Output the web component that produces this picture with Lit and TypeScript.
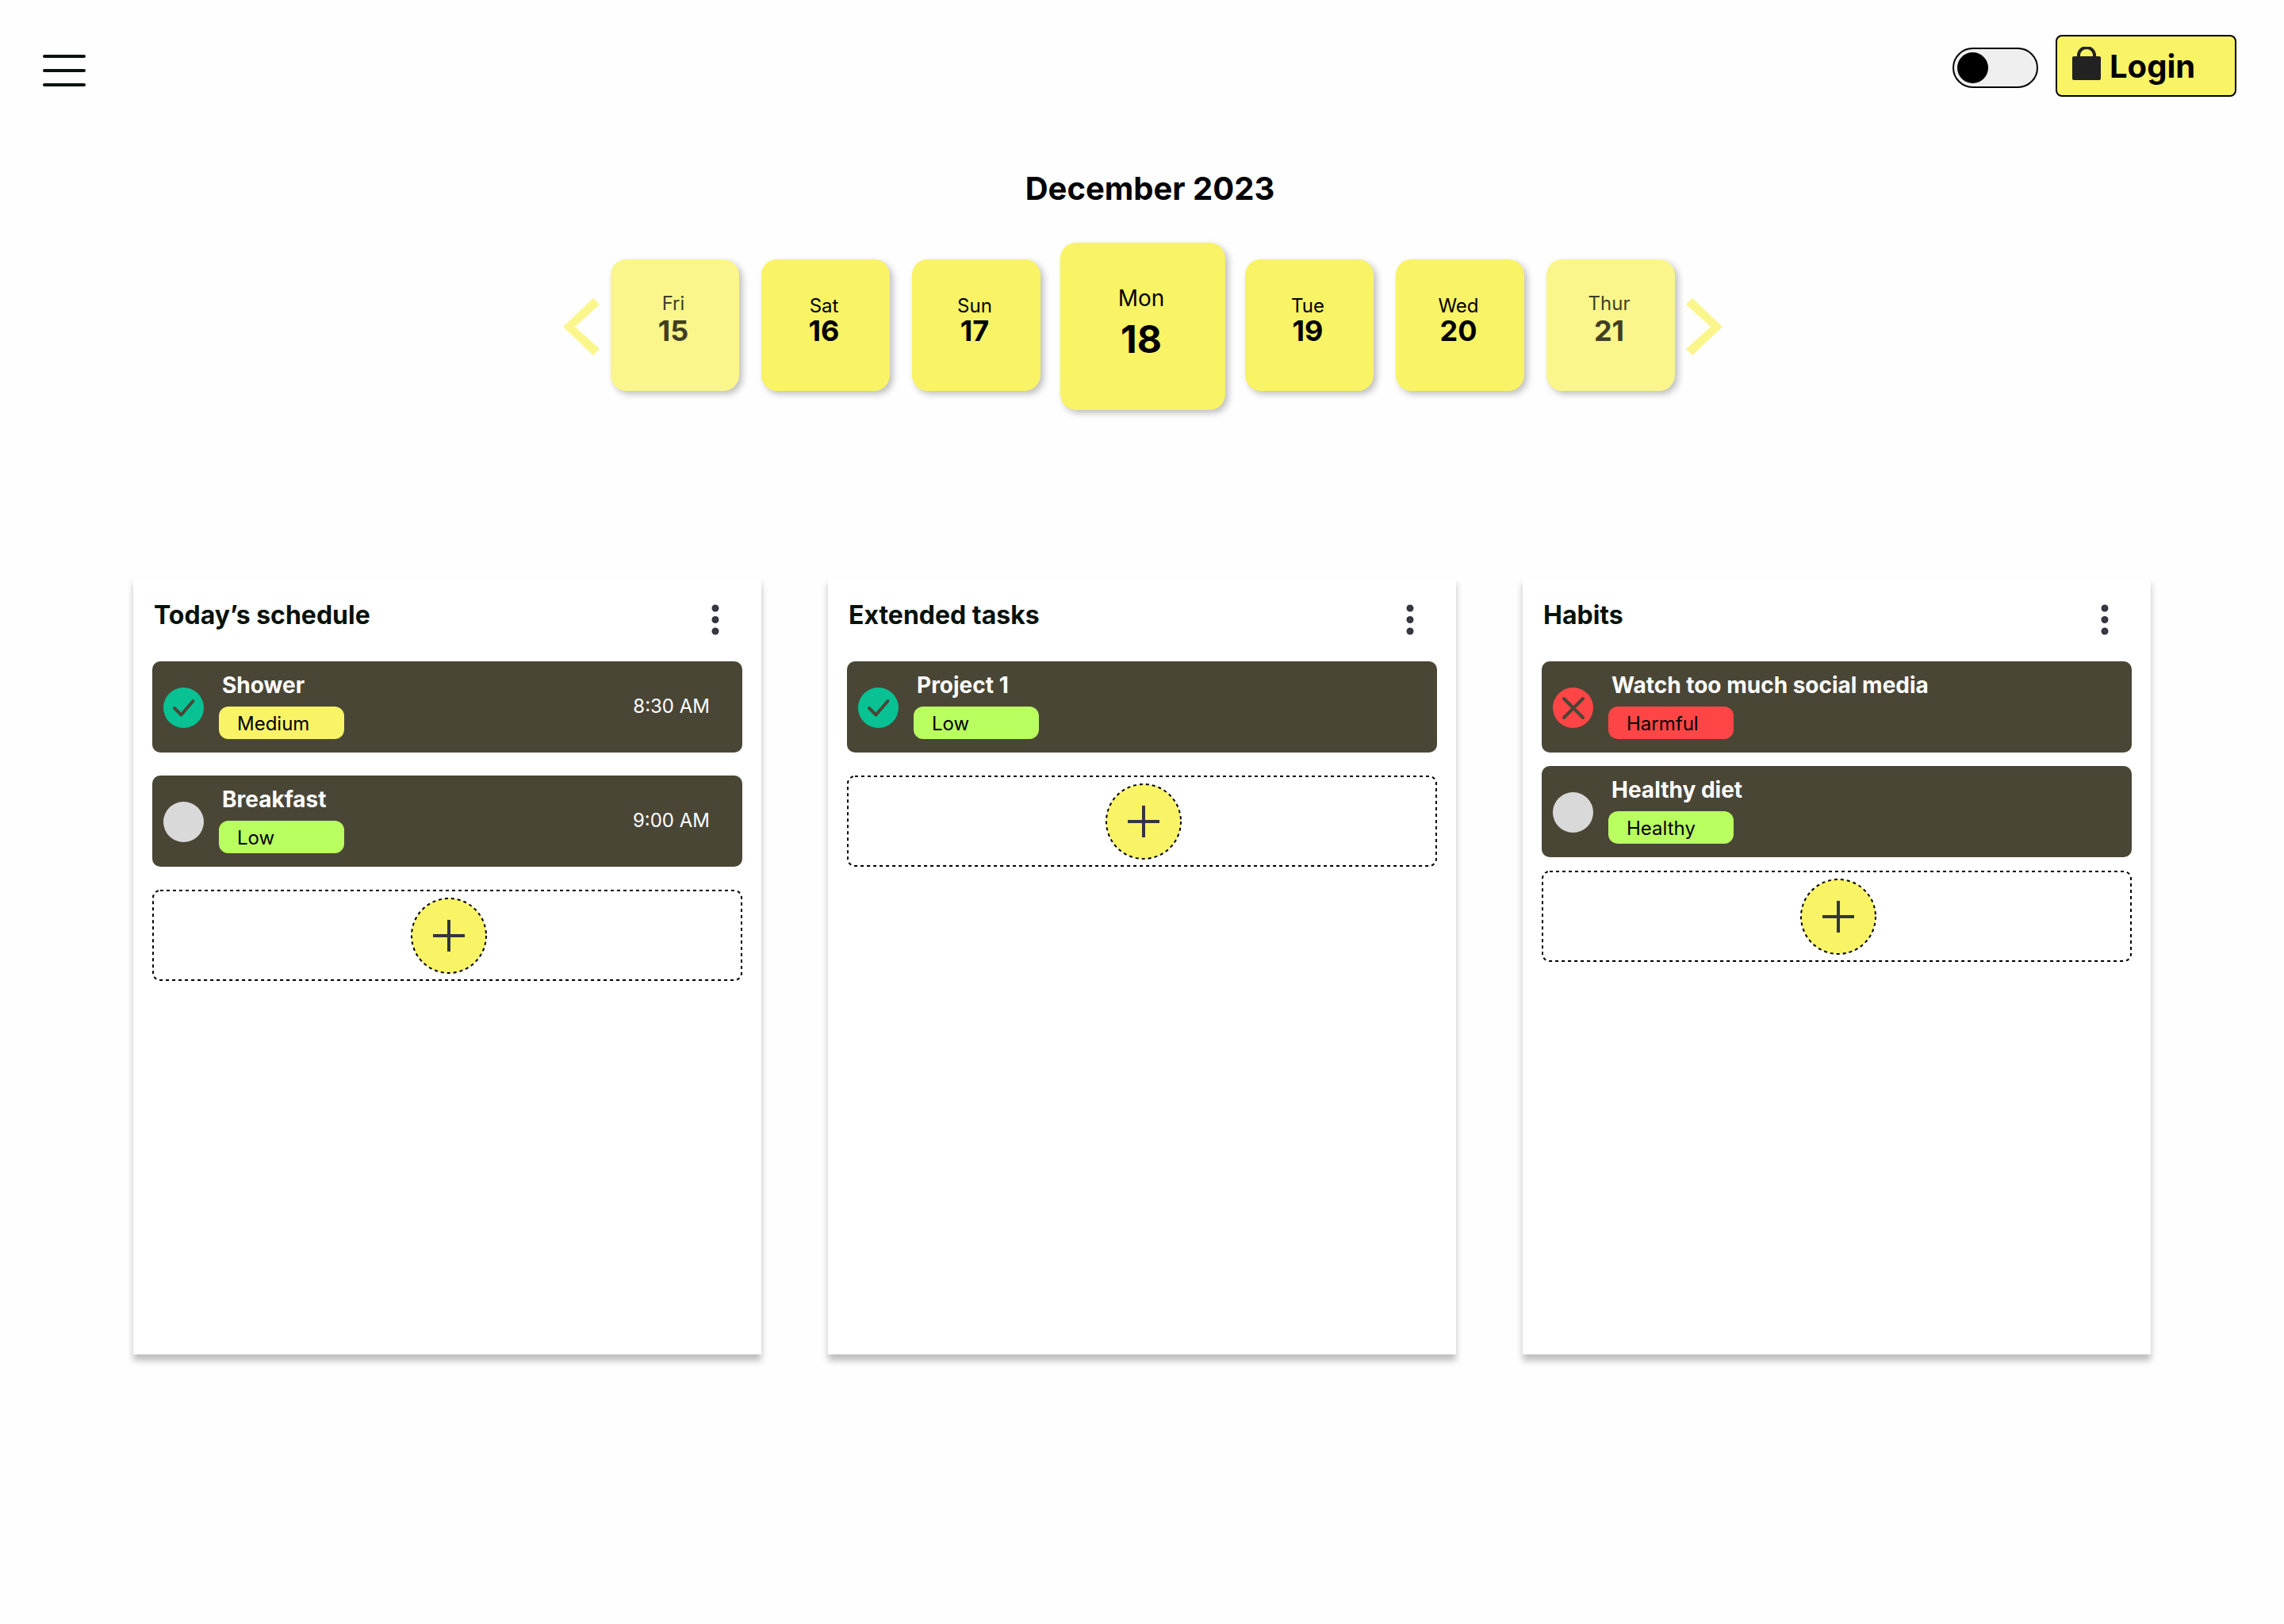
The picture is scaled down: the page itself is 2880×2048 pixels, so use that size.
import { LitElement, html, css, svg, nothing } from "lit";
import { customElement, property, state } from "lit/decorators.js";
import { classMap } from "lit/directives/class-map.js";

type Status = "done" | "failed" | "open";
type Tone = "yellow" | "green" | "red";

interface Task {
  name: string;
  tag: string;
  tone: Tone;
  status: Status;
  time?: string;
}

interface Board {
  title: string;
  compact?: boolean;
  tasks: Task[];
}

interface Day {
  name: string;
  date: number;
  kind?: "muted" | "selected";
}

const DAYS: Day[] = [
  { name: "Fri", date: 15, kind: "muted" },
  { name: "Sat", date: 16 },
  { name: "Sun", date: 17 },
  { name: "Mon", date: 18, kind: "selected" },
  { name: "Tue", date: 19 },
  { name: "Wed", date: 20 },
  { name: "Thur", date: 21, kind: "muted" },
];

const BOARDS: Board[] = [
  {
    title: "Today’s schedule",
    tasks: [
      { name: "Shower", tag: "Medium", tone: "yellow", status: "done", time: "8:30 AM" },
      { name: "Breakfast", tag: "Low", tone: "green", status: "open", time: "9:00 AM" },
    ],
  },
  {
    title: "Extended tasks",
    tasks: [{ name: "Project 1", tag: "Low", tone: "green", status: "done" }],
  },
  {
    title: "Habits",
    compact: true,
    tasks: [
      { name: "Watch too much social media", tag: "Harmful", tone: "red", status: "failed" },
      { name: "Healthy diet", tag: "Healthy", tone: "green", status: "open" },
    ],
  },
];

const reset = css`
  * {
    box-sizing: border-box;
  }
  button {
    margin: 0;
    padding: 0;
    border: 0;
    background: none;
    color: inherit;
    font: inherit;
    cursor: pointer;
  }
  svg {
    display: block;
  }
`;

@customElement("top-bar")
class TopBar extends LitElement {
  static styles = [
    reset,
    css`
      :host {
        display: block;
      }
      .bar {
        display: flex;
        align-items: center;
        gap: 22px;
        padding: 44px 60px 0 54px;
      }
      .menu {
        margin: 12px auto 0 0;
      }
      .switch {
        appearance: none;
        display: flex;
        align-items: center;
        width: 108px;
        height: 51px;
        margin: 5px 0 0;
        padding: 0 4px;
        border: 2px solid #000;
        border-radius: 26px;
        background: #efefef;
        cursor: pointer;
      }
      .switch::before {
        content: "";
        width: 39px;
        height: 39px;
        border-radius: 50%;
        background: #000;
      }
      .switch:checked {
        justify-content: flex-end;
      }
      .login {
        display: flex;
        align-items: center;
        gap: 11px;
        min-width: 228px;
        height: 78px;
        padding: 2px 20px 0 19px;
        border: 2px solid #000;
        border-radius: 8px;
        background: #f9f366;
        color: #000;
        font-size: 40px;
        line-height: 48px;
        font-weight: 700;
      }
    `,
  ];

  render() {
    return html`
      <header class="bar">
        <button class="menu" aria-label="Open menu">
          <svg width="54" height="40" viewBox="0 0 54 40">
            <path d="M2 2H52M2 20H52M2 38H52" stroke="#07120a" stroke-width="4" stroke-linecap="round" />
          </svg>
        </button>
        <input class="switch" type="checkbox" role="switch" aria-label="Dark theme" />
        <button class="login">
          <svg width="36" height="50" viewBox="0 0 36 50" aria-hidden="true">
            <path d="M8 15V11a10 10 0 0 1 20 0V15" fill="none" stroke="#222" stroke-width="4" />
            <rect y="12" width="36" height="30" rx="2" fill="#222" />
          </svg>
          Login
        </button>
      </header>
    `;
  }
}

@customElement("week-strip")
class WeekStrip extends LitElement {
  static styles = [
    reset,
    css`
      :host {
        display: block;
      }
      .month {
        margin: 92px 0 44px;
        padding-left: 20px;
        text-align: center;
        font-size: 40px;
        line-height: 48px;
        font-weight: 700;
      }
      .strip {
        display: flex;
        justify-content: center;
        align-items: center;
        gap: 14px;
        padding-left: 2px;
      }
      .days {
        display: flex;
        align-items: center;
        gap: 28px;
        margin: 0;
        padding: 0;
        list-style: none;
      }
      .day {
        display: flex;
        flex-direction: column;
        align-items: center;
        width: 162px;
        height: 166px;
        margin-bottom: 3px;
        padding: 44px 4px 0 0;
        border-radius: 20px;
        background: #f9f366;
        box-shadow: 4px 4px 8px rgba(0, 0, 0, 0.25);
        color: #000;
      }
      .name {
        font-size: 24px;
        line-height: 29px;
      }
      .date {
        font-size: 36px;
        line-height: 34px;
        font-weight: 700;
      }
      .muted {
        gap: 3px;
        padding-top: 41px;
        background: #faf68c;
        color: #403e24;
      }
      .selected {
        gap: 6px;
        width: 208px;
        height: 211px;
        margin: 0 -3px;
        padding-top: 53px;
      }
      .selected .name {
        font-size: 28px;
        line-height: 34px;
      }
      .selected .date {
        font-size: 48px;
        line-height: 58px;
      }
    `,
  ];

  @state() private days = DAYS;

  private arrow(label: string, points: string) {
    return html`
      <button aria-label=${label}>
        <svg width="46" height="72" viewBox="0 0 46 72">
          <polygon points=${points} fill="#faf68c" />
        </svg>
      </button>
    `;
  }

  render() {
    return html`
      <h1 class="month">December 2023</h1>
      <nav class="strip" aria-label="Week">
        ${this.arrow("Previous days", "38,0 46,8 15,36 46,64 38,72 0,36")}
        <ol class="days">
          ${this.days.map(
            (day) => html`
              <li>
                <button
                  class=${classMap({
                    day: true,
                    muted: day.kind === "muted",
                    selected: day.kind === "selected",
                  })}
                >
                  <span class="name">${day.name}</span>
                  <span class="date">${day.date}</span>
                </button>
              </li>
            `
          )}
        </ol>
        ${this.arrow("Next days", "8,0 0,8 31,36 0,64 8,72 46,36")}
      </nav>
    `;
  }
}

@customElement("task-card")
class TaskCard extends LitElement {
  static styles = [
    reset,
    css`
      :host {
        display: block;
      }
      .card {
        display: flex;
        align-items: center;
        height: 115px;
        padding: 0 41px 0 14px;
        border-radius: 10px;
        background: #4a4636;
        color: #fff;
      }
      .status {
        display: grid;
        margin-right: 19px;
        padding-top: 2px;
      }
      .tick,
      .mark {
        grid-area: 1 / 1;
        width: 51px;
        height: 51px;
      }
      .tick {
        appearance: none;
        margin: 0;
        border-radius: 50%;
        background: #d9d9d9;
        cursor: pointer;
      }
      .done .tick {
        background: #08c294;
      }
      .failed .tick {
        background: #ff4545;
      }
      .mark {
        fill: none;
        stroke: #4a4636;
        stroke-width: 4;
        stroke-linecap: round;
        stroke-linejoin: round;
        pointer-events: none;
      }
      .body {
        display: flex;
        flex: 1;
        flex-direction: column;
        align-items: flex-start;
        gap: 10px;
        padding-bottom: 4px;
      }
      .name {
        padding-left: 4px;
        font-size: 28px;
        line-height: 34px;
        font-weight: 700;
      }
      .tag {
        min-width: 158px;
        padding: 3px 23px 0;
        border-radius: 12px;
        color: #000;
        font-size: 24px;
        line-height: 38px;
      }
      .yellow {
        background: #f9f366;
      }
      .green {
        background: #b9ff60;
      }
      .red {
        background: #ff4545;
      }
      .time {
        padding-bottom: 3px;
        font-size: 24px;
        line-height: 29px;
      }
    `,
  ];

  @property({ attribute: false }) task!: Task;

  private mark(status: Status) {
    if (status === "open") return nothing;
    const shape =
      status === "done"
        ? svg`<path d="M14 26L22.500 34.500L37.500 17" />`
        : svg`<path d="M14 14L38 38M38 14L14 38" />`;
    return html`<svg class="mark" viewBox="0 0 51 51" aria-hidden="true">${shape}</svg>`;
  }

  render() {
    const { name, tag, tone, status, time } = this.task;
    return html`
      <article class="card">
        <span class="status ${status}">
          <input
            class="tick"
            id="tick"
            type="checkbox"
            .checked=${status !== "open"}
          />
          ${this.mark(status)}
        </span>
        <div class="body">
          <label class="name" for="tick">${name}</label>
          <span class="tag ${tone}">${tag}</span>
        </div>
        ${time ? html`<time class="time">${time}</time>` : nothing}
      </article>
    `;
  }
}

@customElement("task-board")
class TaskBoard extends LitElement {
  static styles = [
    reset,
    css`
      :host {
        display: block;
      }
      .board {
        height: 100%;
        padding: 28px 24px 24px;
        background: #fff;
        box-shadow: 0 8px 8px rgba(0, 0, 0, 0.25);
      }
      .head {
        display: flex;
        align-items: flex-start;
        justify-content: space-between;
        padding: 0 24px 33px 2px;
      }
      .title {
        margin: 0;
        color: #07120a;
        font-size: 32px;
        line-height: 39px;
        font-weight: 700;
      }
      .more {
        margin-top: 6px;
      }
      .list {
        display: flex;
        flex-direction: column;
        gap: 29px;
      }
      .compact {
        gap: 17px;
      }
      .add {
        display: grid;
        align-items: center;
        justify-items: center;
        height: 115px;
      }
      .outline,
      .plus {
        grid-area: 1 / 1;
      }
      .outline {
        width: 100%;
        height: 100%;
      }
      .outline rect {
        width: calc(100% - 2px);
        height: calc(100% - 2px);
      }
      .plus {
        width: 100px;
        height: 96px;
        padding-left: 4px;
      }
    `,
  ];

  @property({ attribute: false }) board!: Board;

  render() {
    const { title, compact, tasks } = this.board;
    return html`
      <section class="board">
        <div class="head">
          <h2 class="title">${title}</h2>
          <button class="more" aria-label="Options for ${title}">
            <svg width="20" height="39" viewBox="0 0 20 39" fill="#33363f">
              <circle cx="10" cy="5" r="4.500" />
              <circle cx="10" cy="19.500" r="4.500" />
              <circle cx="10" cy="34" r="4.500" />
              <g fill="#6a6d75">
                <circle cx="10" cy="5" r="0.600" />
                <circle cx="10" cy="19.500" r="0.600" />
                <circle cx="10" cy="34" r="0.600" />
              </g>
            </svg>
          </button>
        </div>
        <div class=${classMap({ list: true, compact: !!compact })}>
          ${tasks.map((task) => html`<task-card .task=${task}></task-card>`)}
          <button class="add" aria-label="Add to ${title}">
            <svg class="outline" aria-hidden="true">
              <rect x="1" y="1" rx="9" fill="none" stroke="#000" stroke-width="2" stroke-dasharray="4 4" />
            </svg>
            <svg class="plus" viewBox="0 0 96 96" aria-hidden="true">
              <circle cx="48" cy="48" r="47" fill="#f9f366" stroke="#000" stroke-width="2" stroke-dasharray="4 4" />
              <path d="M28 48H68M48 28V68" stroke="#33363f" stroke-width="4" />
            </svg>
          </button>
        </div>
      </section>
    `;
  }
}

@customElement("app-root")
class AppRoot extends LitElement {
  static styles = css`
    :host {
      display: block;
      min-height: 100vh;
      background: #fefefe;
      color: #000;
      font-family: Inter, "Liberation Sans", sans-serif;
    }
    .boards {
      display: grid;
      grid-template-columns: repeat(3, minmax(0, 1fr));
      grid-auto-rows: minmax(980px, auto);
      gap: 84px;
      padding: 211px 168px 100px;
    }
  `;

  render() {
    return html`
      <top-bar></top-bar>
      <week-strip></week-strip>
      <main class="boards">
        ${BOARDS.map((board) => html`<task-board .board=${board}></task-board>`)}
      </main>
    `;
  }
}
